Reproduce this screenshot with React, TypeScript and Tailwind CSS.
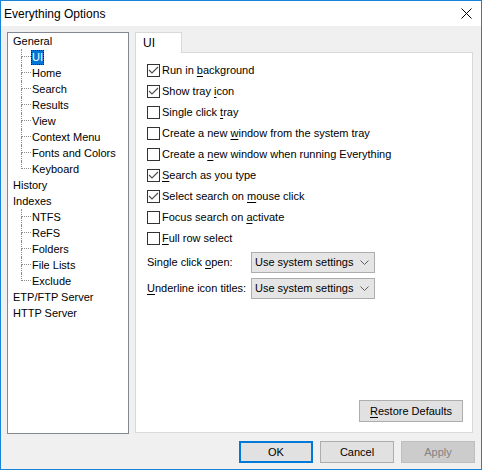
import React from "react";

function U({ children }: { children: React.ReactNode }) {
  return <span className="underline underline-offset-[2px]">{children}</span>;
}

function Checkbox({ checked }: { checked: boolean }) {
  return (
    <span className="w-[13px] h-[13px] border border-[#333333] bg-white flex items-center justify-center shrink-0">
      {checked && (
        <svg width="11" height="11" viewBox="0 0 11 11">
          <path d="M1 5 L4 8 L10 2" fill="none" stroke="#4d4d4d" strokeWidth="1.1" />
        </svg>
      )}
    </span>
  );
}

function TreeTop({ label }: { label: string }) {
  return <div className="h-[16px] flex items-center pl-[5px] whitespace-nowrap">{label}</div>;
}

function TreeChild({ label, last, selected }: { label: string; last?: boolean; selected?: boolean }) {
  return (
    <div className="h-[16px] flex items-center whitespace-nowrap">
      <div className="w-[13px] shrink-0" />
      <div className="w-[10px] h-[16px] flex flex-col shrink-0">
        <div className="h-[8px] border-l border-b border-dotted border-[#8c8c8c]" />
        <div className={last ? "h-[8px]" : "h-[8px] border-l border-dotted border-[#8c8c8c]"} />
      </div>
      <span
        className={
          selected
            ? "h-[15px] flex items-center px-[1px] bg-[#0078d7] text-white outline outline-dotted outline-[#1a1a1a] -outline-offset-1"
            : "h-[15px] flex items-center px-[1px]"
        }
      >
        {label}
      </span>
    </div>
  );
}

function Dropdown() {
  return (
    <div className="w-[124px] h-[21px] bg-[#e5e5e5] border border-[#adadad] flex items-center justify-between pl-[3px] pr-[5px]">
      <span>Use system settings</span>
      <svg width="9" height="6" viewBox="0 0 9 6">
        <path d="M0.5 0.5 L4.5 4.5 L8.5 0.5" fill="none" stroke="#606060" strokeWidth="1" />
      </svg>
    </div>
  );
}

export default function App() {
  const items: [boolean, React.ReactNode][] = [
    [true, <>Run in <U>b</U>ackground</>],
    [true, <>Show tray <U>i</U>con</>],
    [false, <>Single click <U>t</U>ray</>],
    [false, <>Create a new <U>w</U>indow from the system tray</>],
    [false, <>Create a <U>n</U>ew window when running Everything</>],
    [true, <><U>S</U>earch as you type</>],
    [true, <>Select search on <U>m</U>ouse click</>],
    [false, <>Focus search on <U>a</U>ctivate</>],
    [false, <><U>F</U>ull row select</>],
  ];

  return (
    <div className="w-[482px] h-[470px] border border-[#1883d7] flex flex-col bg-[#f0f0f0] text-black font-['Liberation_Sans',sans-serif] text-[11px] overflow-hidden">
      <div className="h-[25px] shrink-0 bg-white flex items-center justify-between pl-[3px] pr-[9px] text-[12px]">
        <span>Everything Options</span>
        <svg width="11" height="11" viewBox="0 0 11 11">
          <path d="M0.5 0.5 L10.5 10.5 M10.5 0.5 L0.5 10.5" stroke="#000" strokeWidth="1" />
        </svg>
      </div>
      <div className="flex-1 flex flex-col px-[6px] pt-[6px]">
        <div className="flex gap-[6px]">
          <div className="w-[122px] h-[402px] shrink-0 bg-white border border-[#828790] flex flex-col">
            <TreeTop label="General" />
            <TreeChild label="UI" selected />
            <TreeChild label="Home" />
            <TreeChild label="Search" />
            <TreeChild label="Results" />
            <TreeChild label="View" />
            <TreeChild label="Context Menu" />
            <TreeChild label="Fonts and Colors" />
            <TreeChild label="Keyboard" last />
            <TreeTop label="History" />
            <TreeTop label="Indexes" />
            <TreeChild label="NTFS" />
            <TreeChild label="ReFS" />
            <TreeChild label="Folders" />
            <TreeChild label="File Lists" />
            <TreeChild label="Exclude" last />
            <TreeTop label="ETP/FTP Server" />
            <TreeTop label="HTTP Server" />
          </div>
          <div className="w-[338px] shrink-0 flex flex-col">
            <div className="flex">
              <div className="w-[47px] h-[21px] -mb-[1px] relative z-10 bg-white border-t border-l border-r border-[#d9d9d9] flex items-center pl-[7px] text-[12px]">
                UI
              </div>
            </div>
            <div className="h-[381px] bg-white border border-[#d9d9d9] flex flex-col pl-[11px] pt-[7px] pr-[9px] pb-[10px]">
              {items.map(([c, l], i) => (
                <div key={i} className="h-[21px] flex items-center gap-[2px] whitespace-nowrap">
                  <Checkbox checked={c} />
                  <span>{l}</span>
                </div>
              ))}
              <div className="h-[21px] mt-[3px] flex items-center whitespace-nowrap">
                <span className="w-[104px] shrink-0">Single click <U>o</U>pen:</span>
                <Dropdown />
              </div>
              <div className="h-[21px] mt-[5px] flex items-center whitespace-nowrap">
                <span className="w-[104px] shrink-0"><U>U</U>nderline icon titles:</span>
                <Dropdown />
              </div>
              <div className="flex-1" />
              <div className="flex justify-end">
                <div className="w-[104px] h-[22px] bg-[#e1e1e1] border border-[#adadad] flex items-center justify-center">
                  <span><U>R</U>estore Defaults</span>
                </div>
              </div>
            </div>
          </div>
        </div>
        <div className="mt-[7px] flex justify-end gap-[7px]">
          <div className="w-[74px] h-[22px] bg-[#e1e1e1] border-2 border-[#0078d7] flex items-center justify-center">OK</div>
          <div className="w-[74px] h-[22px] bg-[#e1e1e1] border border-[#adadad] flex items-center justify-center">Cancel</div>
          <div className="w-[74px] h-[22px] bg-[#cccccc] border border-[#bfbfbf] text-[#838383] flex items-center justify-center">Apply</div>
        </div>
      </div>
    </div>
  );
}
